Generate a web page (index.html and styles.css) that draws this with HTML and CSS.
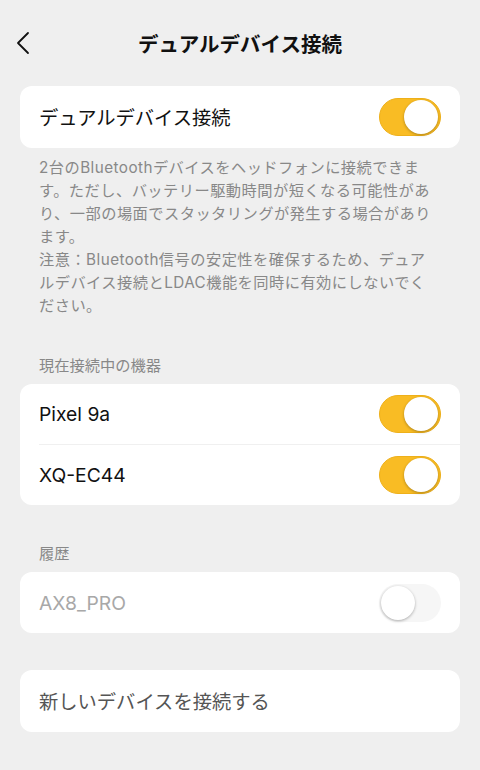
FILE: index.html
```html
<!DOCTYPE html>
<html lang="ja">
<head>
    <meta charset="UTF-8">
    <meta name="viewport" content="width=device-width, initial-scale=1.0">
    <title>デュアルデバイス接続</title>
    <link rel="stylesheet" href="styles.css">
</head>
<body>
    <header class="topbar">
        <button class="back" aria-label="戻る">
            <svg width="16" height="24" viewBox="0 0 16 24" fill="none" stroke="#111" stroke-width="1.8" stroke-linecap="round" stroke-linejoin="round">
                <path d="M13 2 L3 12 L13 22"/>
            </svg>
        </button>
        <h1 class="title">デュアルデバイス接続</h1>
        <span></span>
    </header>

    <div class="card">
        <div class="row tall">
            <span class="label">デュアルデバイス接続</span>
            <span class="switch on"></span>
        </div>
    </div>

    <!-- line breaks kept as in the app -->
    <p class="desc">2台のBluetoothデバイスをヘッドフォンに接続できま<br>す。ただし、バッテリー駆動時間が短くなる可能性があ<br>り、一部の場面でスタッタリングが発生する場合があり<br>ます。<br>注意：Bluetooth信号の安定性を確保するため、デュア<br>ルデバイス接続とLDAC機能を同時に有効にしないでく<br>ださい。</p>

    <h2 class="section">現在接続中の機器</h2>
    <div class="card">
        <div class="row short">
            <span class="label">Pixel 9a</span>
            <span class="switch on"></span>
        </div>
        <div class="row short divided">
            <span class="label">XQ-EC44</span>
            <span class="switch on"></span>
        </div>
    </div>

    <h2 class="section">履歴</h2>
    <div class="card">
        <div class="row">
            <span class="label muted">AX8_PRO</span>
            <span class="switch off"></span>
        </div>
    </div>

    <div class="card add">
        <div class="row tall">
            <span class="label dim">新しいデバイスを接続する</span>
        </div>
    </div>
</body>
</html>
```

FILE: styles.css
```css
body {
    margin: 0;
    background-color: #efefef;
    font-family: Inter, "Noto Sans CJK JP", sans-serif;
    color: #111;
}
.topbar {
    display: grid;
    grid-template-columns: 1fr auto 1fr;
    align-items: center;
    height: 86px;
    padding: 0 15px;
}
.back {
    justify-self: start;
    background: none;
    border: 0;
    padding: 0;
    width: 20px;
    height: 26px;
    display: flex;
    align-items: center;
}
.title {
    margin: 0;
    font-size: 20.5px;
    font-weight: 700;
}
.card {
    background-color: #fff;
    margin: 0 20px;
    border-radius: 12px;
}
.row {
    display: flex;
    align-items: center;
    justify-content: space-between;
    height: 61px;
    padding: 0 19px;
}
.row.tall {
    height: 62px;
}
.row.short {
    height: 60px;
}
.row.divided {
    border-top: 1px solid #f0f0f0;
    margin-left: 19px;
    padding-left: 0;
}
.label {
    font-size: 19.3px;
}
.label.muted {
    color: #a8a8a8;
}
.label.dim {
    color: #555;
}
.switch {
    width: 62px;
    height: 38px;
    border-radius: 19px;
    display: flex;
    align-items: center;
    box-sizing: border-box;
    padding: 0 2px;
}
.switch::after {
    content: "";
    width: 34px;
    height: 34px;
    border-radius: 50%;
    background-color: #fff;
    box-shadow: 0 1px 3px rgba(0, 0, 0, 0.3);
}
.switch.on {
    background-color: #f9bc24;
    border: 1px solid #eeb01a;
    justify-content: flex-end;
}
.switch.off {
    background-color: #f6f6f6;
    justify-content: flex-start;
}
.desc {
    margin: 8px 39px 0;
    font-size: 15.25px;
    line-height: 23px;
    letter-spacing: 0.45px;
    color: #888;
    white-space: nowrap;
}
.section {
    margin: 39px 39px 8px;
    font-size: 15.25px;
    line-height: 20px;
    font-weight: 400;
    color: #888;
}
.add {
    margin-top: 37px;
}
```
